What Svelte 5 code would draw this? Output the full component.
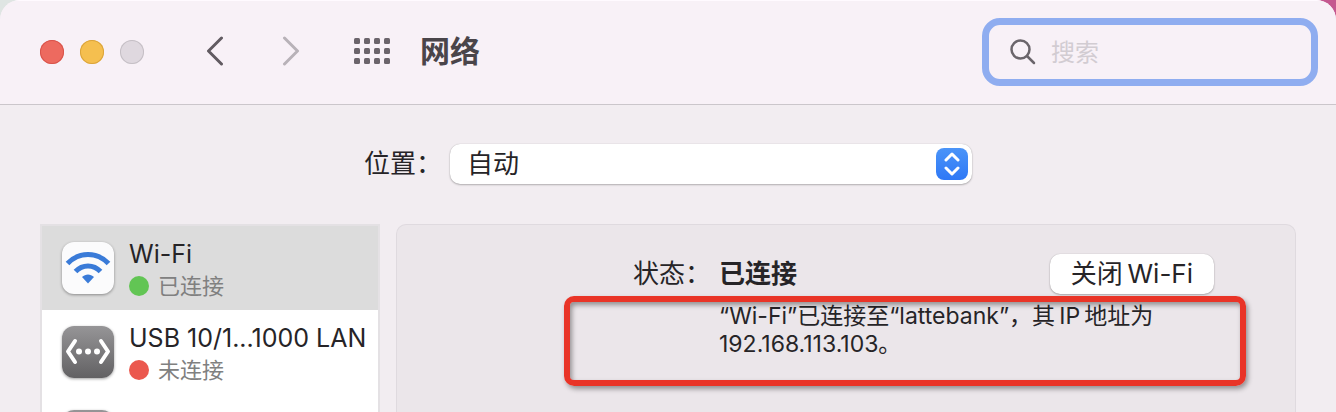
<script lang="ts">
    interface Service {
        name: string
        status: string
        connected: boolean
        icon: 'wifi' | 'ethernet'
    }

    const services: Service[] = [
        { name: 'Wi-Fi', status: '已连接', connected: true, icon: 'wifi' },
        {
            name: 'USB 10/1...1000 LAN',
            status: '未连接',
            connected: false,
            icon: 'ethernet',
        },
        { name: '', status: '', connected: false, icon: 'ethernet' },
    ]

    let selected = $state(0)
    let location = $state('auto')
    let query = $state('')
</script>

<div class="desktop">
    <div class="window">
        <header class="toolbar">
            <div class="lights">
                <button class="light close" aria-label="关闭"></button>
                <button class="light minimize" aria-label="最小化"></button>
                <button class="light zoom" aria-label="缩放" disabled></button>
            </div>

            <nav class="history">
                <button class="tool" aria-label="后退">
                    <svg width="18" height="30" viewBox="0 0 18 30">
                        <path d="M15.500 2 2.500 15 15.500 28" />
                    </svg>
                </button>
                <button class="tool" aria-label="前进" disabled>
                    <svg width="18" height="30" viewBox="0 0 18 30">
                        <path d="M2.500 2 15.500 15 2.500 28" />
                    </svg>
                </button>
            </nav>

            <button class="tool" aria-label="显示全部">
                <svg class="grid" width="36" height="26" viewBox="0 0 36 26">
                    {#each [0, 10, 20, 30] as x}
                        {#each [0, 10, 20] as y}
                            <rect {x} {y} width="6" height="6" rx="1.500" />
                        {/each}
                    {/each}
                </svg>
            </button>

            <h1>网络</h1>

            <label class="search">
                <svg width="26" height="26" viewBox="0 0 26 26">
                    <circle cx="10.500" cy="10.500" r="9" />
                    <path d="M17 17 24 24" />
                </svg>
                <input
                    type="text"
                    placeholder="搜索"
                    aria-label="搜索"
                    bind:value={query}
                />
            </label>
        </header>

        <div class="location">
            <label for="location">位置：</label>
            <div class="popup">
                <select id="location" bind:value={location}>
                    <option value="auto">自动</option>
                </select>
                <span class="stepper">
                    <svg width="16" height="24" viewBox="0 0 16 24">
                        <path d="M2 8 8 2 14 8M2 16 8 22 14 16" />
                    </svg>
                </span>
            </div>
        </div>

        <main>
            <ul class="services">
                {#each services as service, i}
                    <li>
                        <button
                            class="service"
                            class:selected={selected === i}
                            aria-label={service.name || '网络服务'}
                            onclick={() => (selected = i)}
                        >
                            <span class="tile {service.icon}">
                                {#if service.icon === 'wifi'}
                                    <svg width="52" height="52" viewBox="0 0 52 52">
                                        <path
                                            class="arc"
                                            d="M5.500 21.500C17 9.500 35 9.500 46.500 21.500"
                                        />
                                        <path
                                            class="arc"
                                            d="M13.500 29.500C20.500 22 31.500 22 38.500 29.500"
                                        />
                                        <path
                                            class="dot"
                                            d="M20 35C23.500 31.500 28.500 31.500 32 35L26 41.500Z"
                                        />
                                    </svg>
                                {:else}
                                    <svg width="52" height="52" viewBox="0 0 52 52">
                                        <path
                                            class="bracket"
                                            d="M13 15 6 25.500 13 36M39 15 46 25.500 39 36"
                                        />
                                        <circle cx="17" cy="25.500" r="3" />
                                        <circle cx="26" cy="25.500" r="3" />
                                        <circle cx="35" cy="25.500" r="3" />
                                    </svg>
                                {/if}
                            </span>
                            {#if service.name}
                                <span class="text">
                                    <span class="name">{service.name}</span>
                                    <span class="status">
                                        <span
                                            class="led"
                                            class:on={service.connected}
                                        ></span>
                                        {service.status}
                                    </span>
                                </span>
                            {/if}
                        </button>
                    </li>
                {/each}
            </ul>

            <section class="detail">
                <span class="label">状态：</span>
                <strong>已连接</strong>
                <button class="push">关闭&thinsp;Wi-Fi</button>
                <p>“Wi-Fi”已连接至“lattebank”，其&thinsp;IP&thinsp;地址为 192.168.113.103。</p>
                <div class="highlight"></div>
            </section>
        </main>
    </div>
</div>

<style>
    :global(body) {
        margin: 0;
    }

    .desktop {
        height: 100vh;
        overflow: hidden;
        background: linear-gradient(90deg, #dfe5e3 50%, #c4588f 50%);
    }

    .window {
        display: flex;
        flex-direction: column;
        height: 100%;
        overflow: hidden;
        box-sizing: border-box;
        border-radius: 20px 20px 0 0;
        background: #f2edf1;
        color: #262427;
        font-family: Inter, 'Noto Sans CJK SC', sans-serif;
        font-size: 26px;
        line-height: 32px;
    }

    button,
    input,
    select {
        margin: 0;
        padding: 0;
        border: none;
        background: none;
        color: inherit;
        font: inherit;
    }

    /* Toolbar */
    .toolbar {
        flex: none;
        display: flex;
        align-items: center;
        height: 104px;
        padding: 0 18px 0 40px;
        border-bottom: 1px solid #cbc6cb;
        background: #f8f1f7;
        box-shadow: inset 0 1px #fffaff;
    }
    .lights {
        display: flex;
        gap: 16px;
    }
    .light {
        width: 24px;
        height: 24px;
        border-radius: 50%;
    }
    .close {
        background: #ed6a5f;
        box-shadow: inset 0 0 0 1px #d8544b;
    }
    .minimize {
        background: #f5bf4f;
        box-shadow: inset 0 0 0 1px #dba43b;
    }
    .zoom {
        background: #dfd8df;
        box-shadow: inset 0 0 0 1px #c5bfc5;
    }
    .history {
        display: flex;
        gap: 58px;
        margin: 0 54px 2px 62px;
    }
    .tool {
        display: flex;
    }
    .tool path {
        fill: none;
        stroke: #615b61;
        stroke-width: 3;
        stroke-linecap: round;
        stroke-linejoin: round;
    }
    .tool:disabled path {
        stroke: #b8b2b8;
    }
    .grid {
        margin-bottom: 2px;
        fill: #6b646b;
    }
    h1 {
        flex: 1;
        margin: 0 0 2px 30px;
        color: #4a454a;
        font-size: 30px;
        font-weight: 700;
    }
    .search {
        display: flex;
        align-items: center;
        gap: 15px;
        box-sizing: border-box;
        width: 336px;
        height: 68px;
        padding: 0 20px 0 21px;
        border: 7px solid #8fadf0;
        border-radius: 18px;
    }
    .search svg {
        flex: none;
        fill: none;
        stroke: #6b656b;
        stroke-width: 2.500;
        stroke-linecap: round;
    }
    .search input {
        flex: 1;
        min-width: 0;
        padding-top: 2px;
        outline: none;
        font-size: 24px;
    }
    .search input::placeholder {
        color: #d2ccd2;
        opacity: 1;
    }

    /* Location pop-up */
    .location {
        flex: none;
        display: flex;
        align-items: center;
        justify-content: center;
        gap: 8px;
        padding: 39px 0 40px;
    }
    .popup {
        display: grid;
        align-items: center;
        width: 522px;
        height: 40px;
        border-radius: 10px;
        background: #fff;
        box-shadow:
            0 0 1px #00000040,
            0 1px 2px #00000040;
    }
    .popup select {
        grid-area: 1 / 1;
        width: 100%;
        height: 100%;
        padding: 0 44px 0 17px;
        appearance: none;
    }
    .stepper {
        grid-area: 1 / 1;
        justify-self: end;
        display: grid;
        place-items: center;
        width: 32px;
        height: 32px;
        margin-right: 4px;
        border-radius: 8px;
        background: linear-gradient(#4b94f8, #2e78f6);
        pointer-events: none;
    }
    .stepper path {
        fill: none;
        stroke: #fff;
        stroke-width: 3;
        stroke-linecap: round;
        stroke-linejoin: round;
    }

    main {
        flex: 1;
        display: flex;
        gap: 16px;
        min-height: 0;
        padding: 0 40px;
    }

    /* Service list */
    .services {
        flex: none;
        width: 336px;
        margin: 0;
        padding: 0;
        overflow: hidden;
        border: 2px solid #e4e1e4;
        border-bottom: none;
        background: #fff;
        list-style: none;
    }
    .service {
        display: flex;
        align-items: center;
        gap: 15px;
        width: 100%;
        height: 84px;
        padding: 0 8px 0 20px;
        text-align: left;
    }
    .selected {
        background: #dcdcdc;
    }
    .tile {
        display: flex;
        border-radius: 12px;
        box-shadow: 0 1px 3px #00000060;
    }
    .wifi {
        background: #fbfbfc;
    }
    .ethernet {
        background: linear-gradient(#969597, #626163);
    }
    .arc {
        fill: none;
        stroke: #3a7bd8;
        stroke-width: 5;
    }
    .dot {
        fill: #3a7bd8;
    }
    .bracket {
        fill: none;
        stroke: #fff;
        stroke-width: 4;
        stroke-linecap: round;
        stroke-linejoin: round;
    }
    .ethernet circle {
        fill: #fff;
    }
    .text {
        display: flex;
        flex-direction: column;
        padding-top: 4px;
        white-space: nowrap;
    }
    .name {
        font-size: 25px;
    }
    .status {
        display: flex;
        align-items: center;
        gap: 9px;
        color: #808080;
        font-size: 22px;
    }
    .led {
        width: 20px;
        height: 20px;
        border-radius: 50%;
        background: #eb584e;
    }
    .led.on {
        background: #62c554;
    }

    /* Detail pane */
    .detail {
        position: relative;
        flex: 1;
        display: grid;
        grid-template-columns: 314px 1fr auto;
        align-content: start;
        align-items: center;
        column-gap: 8px;
        row-gap: 8px;
        padding: 29px 81px 0 0;
        border: 1px solid #dfdadf;
        border-bottom: none;
        border-radius: 10px 10px 0 0;
        background: #ebe6ea;
    }
    .label {
        text-align: right;
    }
    strong {
        font-weight: 700;
    }
    .push {
        height: 40px;
        padding: 0 21px;
        border-radius: 10px;
        background: #fff;
        box-shadow:
            0 0 1px #00000040,
            0 1px 2px #00000040;
    }
    p {
        grid-column: 2 / 4;
        margin: 0;
        padding-right: 40px;
        font-size: 23px;
        line-height: 28px;
    }
    .highlight {
        position: absolute;
        top: 71px;
        right: 49px;
        left: 167px;
        height: 78px;
        border: 6px solid #e93427;
        border-radius: 10px;
        box-shadow:
            2px 3px 5px #00000060,
            inset 2px 3px 5px #00000060;
        pointer-events: none;
    }
</style>
